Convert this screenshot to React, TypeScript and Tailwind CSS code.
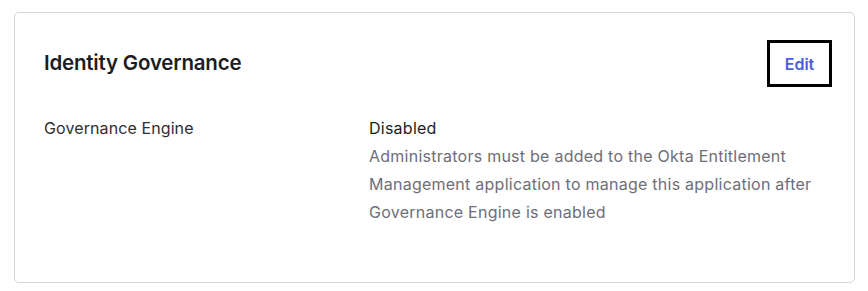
export default function App() {
  return (
    <div className="w-[868px] h-[291px] bg-white pt-[12px] pl-[14px]" style={{ fontFamily: 'Inter, "Noto Sans", sans-serif' }}>
      <div className="w-[841px] h-[271px] border border-[#d6d6d6] rounded-[5px] pt-[27px] pl-[29px] pr-[22px]">
        <div className="flex items-center justify-between h-[47px]">
          <h2 className="text-[20.5px] font-semibold text-[#1d1d21] tracking-[-0.2px]">Identity Governance</h2>
          <button className="w-[65px] h-[47px] border-[3px] border-black text-[16px] font-semibold text-[#4c5bdb] flex items-center justify-center">
            Edit
          </button>
        </div>
        <div className="flex mt-[27px] text-[16px] leading-[28px]">
          <div className="w-[325px] text-[#2e2e33] tracking-[0.1px]">Governance Engine</div>
          <div className="w-[455px] tracking-[0.25px]">
            <div className="text-[#1d1d21]">Disabled</div>
            <p className="text-[#6e6e78]">
              Administrators must be added to the Okta Entitlement Management application to manage this application after Governance Engine is enabled
            </p>
          </div>
        </div>
      </div>
    </div>
  );
}
